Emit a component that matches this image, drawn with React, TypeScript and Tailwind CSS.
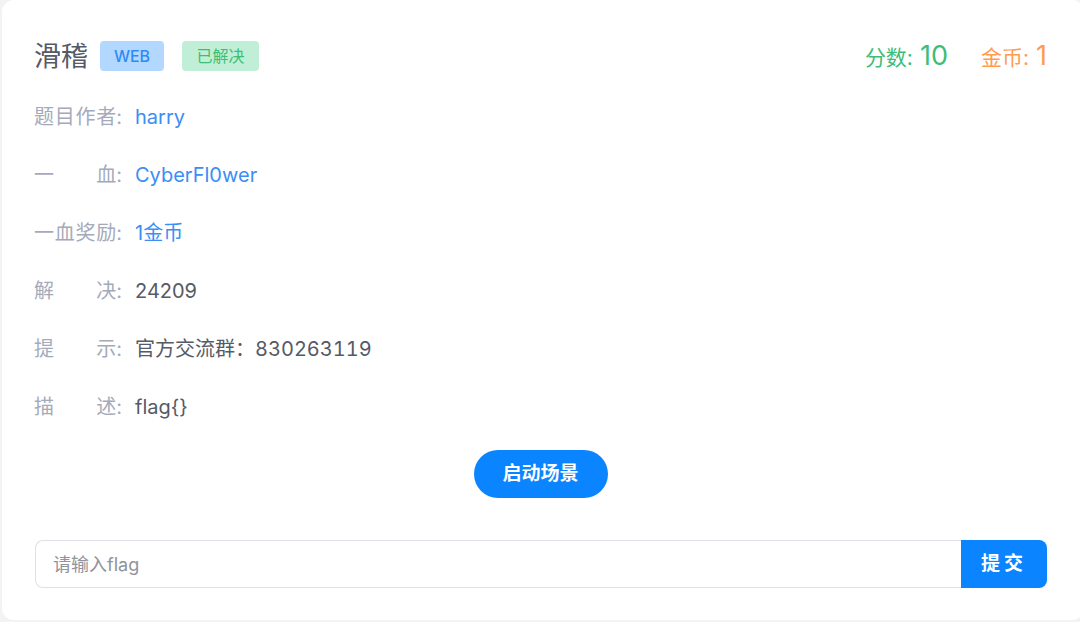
const font = { fontFamily: 'Inter, "Noto Sans CJK SC", sans-serif' };

function Label({ chars }: { chars: string[] }) {
  // labels are spread to a fixed width, like text-align-last: justify
  return (
    <div className="flex w-[88px] justify-between text-[#a5aabb]">
      {chars.map((c, i) => (
        <span key={i}>{c}</span>
      ))}
    </div>
  );
}

const rows: { label: string[]; value: string; tone: string }[] = [
  { label: ['题', '目', '作', '者:'], value: 'harry', tone: 'text-[#3a8ef5]' },
  { label: ['一', '血:'], value: 'CyberFl0wer', tone: 'text-[#3a8ef5]' },
  { label: ['一', '血', '奖', '励:'], value: '1金币', tone: 'text-[#3a8ef5]' },
  { label: ['解', '决:'], value: '24209', tone: 'text-[#555a66]' },
  { label: ['提', '示:'], value: '官方交流群：830263119', tone: 'text-[#555a66] tabular-nums' },
  { label: ['描', '述:'], value: 'flag{}', tone: 'text-[#555a66]' },
];

export default function App() {
  return (
    <div className="h-[622px] w-[1080px] overflow-hidden bg-[#f2f3f5] pb-[2px] pl-[2px]" style={font}>
      <div className="flex h-full w-[1082px] flex-col rounded-xl bg-white pl-8 pr-[37px] pt-[41px]">
        {/* header */}
        <div className="flex h-[30px] items-center">
          <h1 className="text-[27px] leading-none text-[#555a66]">滑稽</h1>
          <span className="ml-[12px] flex h-[30px] w-[64px] items-center justify-center rounded-[4px] bg-[#b3d8ff] text-[16px] font-medium text-[#2f8af5]">
            WEB
          </span>
          <span className="ml-[18px] flex h-[30px] w-[77px] items-center justify-center rounded-[4px] bg-[#c0eed6] text-[16px] text-[#3cbf74]">
            已解决
          </span>
          <div className="ml-auto flex items-baseline">
            <span className="text-[21px] text-[#3dbd78]">分数:</span>
            <span className="ml-[7px] text-[27px] text-[#3dbd78]">10</span>
            <span className="ml-[33px] text-[21px] text-[#ff9b4f]">金币:</span>
            <span className="ml-[7px] text-[27px] text-[#ff9b4f]">1</span>
          </div>
        </div>

        {/* info rows */}
        <div className="mt-[17px] flex flex-col">
          {rows.map((r) => (
            <div key={r.value} className="flex h-[58px] items-center text-[20px]">
              <Label chars={r.label} />
              <span className={`ml-[13px] ${r.tone}`}>{r.value}</span>
            </div>
          ))}
        </div>

        <div className="mt-[14px] flex justify-center">
          <button className="h-[48px] w-[134px] rounded-full bg-[#0a84ff] text-[19px] font-bold text-white">
            启动场景
          </button>
        </div>

        {/* flag input */}
        <div className="mt-[42px] flex h-[48px] pl-[1px]">
          <input
            placeholder="请输入flag"
            className="h-full flex-1 rounded-l-lg border border-r-0 border-[#dfe1e6] px-[17px] text-[18px] text-[#555a66] outline-none placeholder:text-[#8f939c]"
          />
          <button className="h-full w-[86px] rounded-r-lg bg-[#0a84ff] text-[19px] font-bold tracking-[4px] text-white">
            提交
          </button>
        </div>
      </div>
    </div>
  );
}
